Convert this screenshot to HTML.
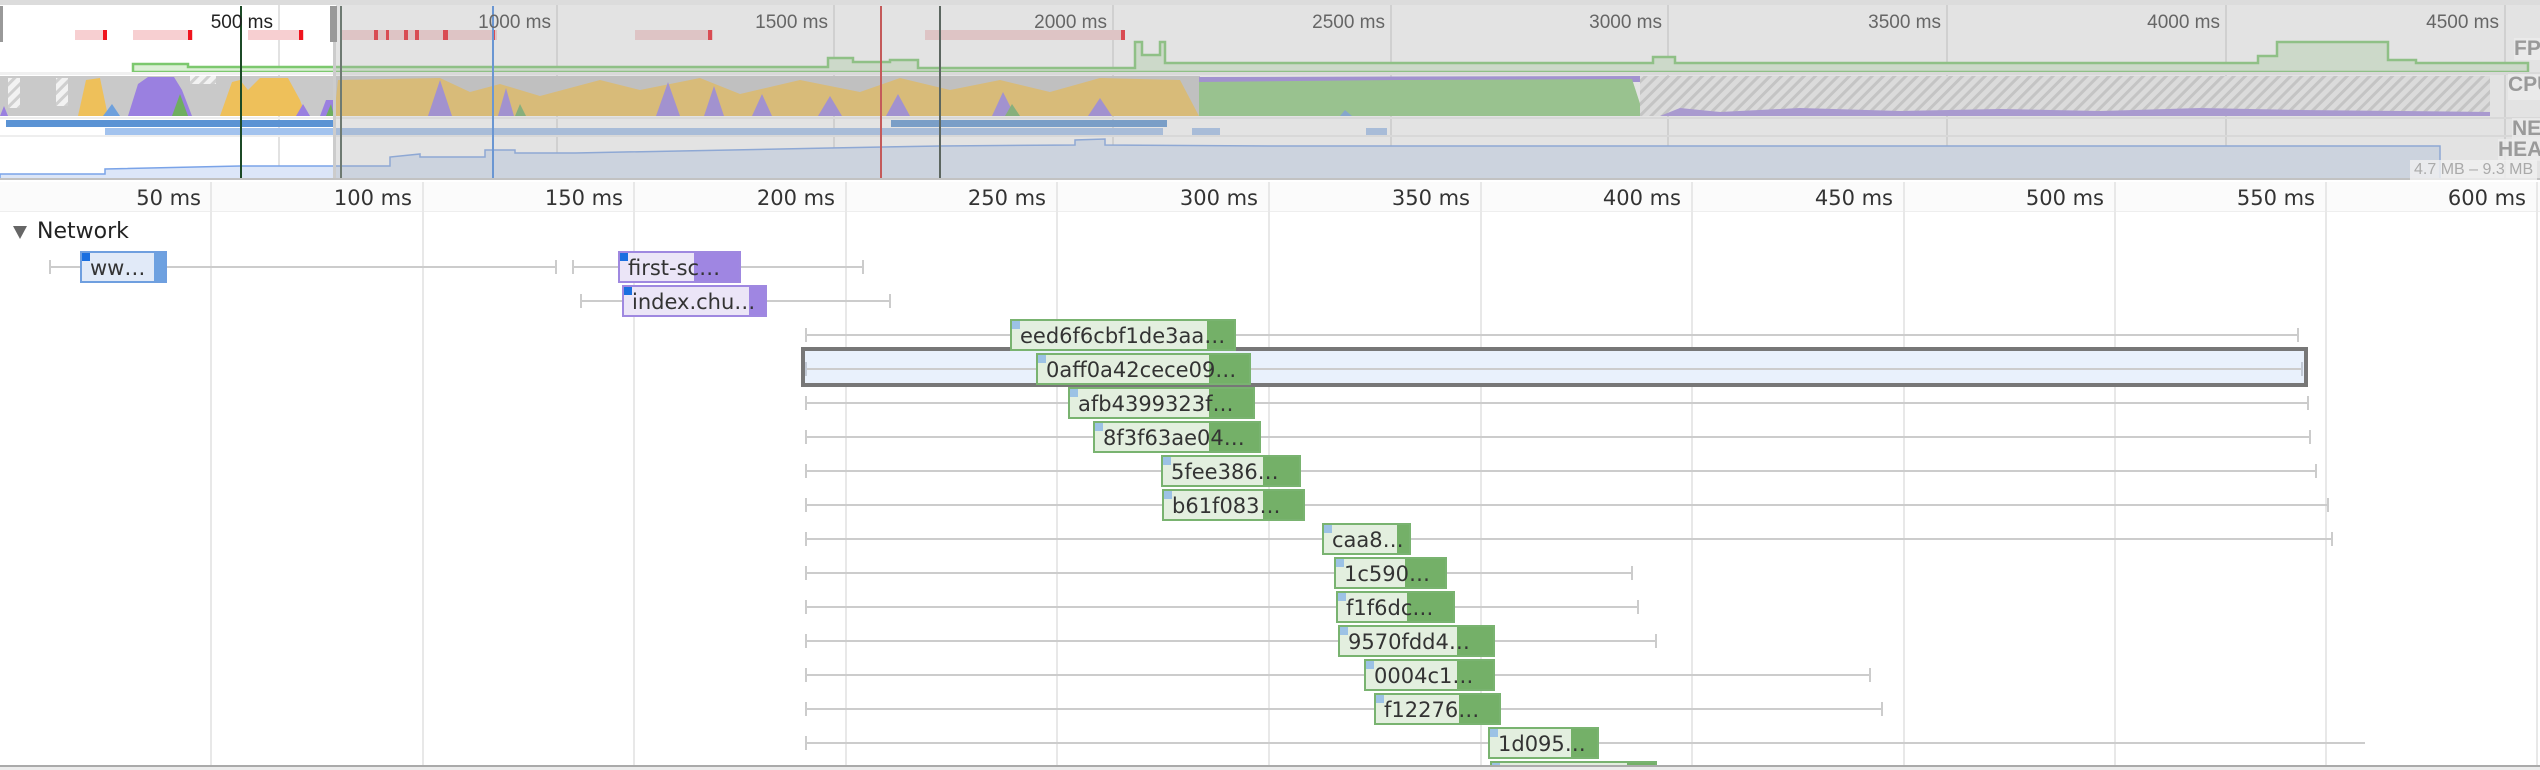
<!DOCTYPE html>
<html><head><meta charset="utf-8"><style>
*{margin:0;padding:0;box-sizing:border-box}
html{width:2540px;height:770px;overflow:hidden}
body{width:2540px;height:770px;background:#fff;position:relative;overflow:hidden;font-family:"DejaVu Sans","Liberation Sans",sans-serif}
.a{position:absolute}
.gl{position:absolute;top:182px;height:584px;width:2px;background:#e8e8e8}
.rl{position:absolute;top:186px;width:140px;text-align:right;font-size:21px;color:#333;line-height:24px}
.w{position:absolute;top:9px;height:14px;border-left:2px solid #ccc;border-right:2px solid #ccc}
.w::after{content:"";position:absolute;left:0;right:0;top:6px;height:2px;background:#ccc}
.r{position:absolute;left:0;width:2540px;height:32px}
.b{position:absolute;top:0;height:32px;border:2px solid #79b370;background:#e3efdf;overflow:hidden}
.b .d{position:absolute;top:0;bottom:0;right:0;background:#74b068}
.b .s{position:absolute;left:0;top:0;width:8px;height:8px;background:#9cc2e5}
.b span{position:absolute;left:8px;top:2px;font-size:21px;line-height:26px;color:#333;white-space:nowrap}
.b.p{border-color:#9f88e0;background:#ebe5f7}.b.p .d{background:#9f86e2}
.b.bl{border-color:#6f9fdf;background:#e1eaf8}.b.bl .d{background:#6ea1e0}
.b .s.k{background:#1a6fe0}
.ol{position:absolute;font-family:"Liberation Sans",sans-serif;font-size:19px;color:#333;width:120px;text-align:right;top:12px}
.lab{position:absolute;font-family:"Liberation Sans",sans-serif;font-weight:bold;font-size:21px;color:#9a9a9a;background:rgba(235,235,235,.8);line-height:22px}
</style></head><body>
<div class="a" style="left:0;top:0;width:2540px;height:5px;background:#dcdcdc"></div>
<svg class="a" style="left:0;top:5px" width="2540" height="175" viewBox="0 5 2540 175">
<defs><pattern id="h" width="8" height="8" patternUnits="userSpaceOnUse" patternTransform="rotate(45)"><rect width="8" height="8" fill="#f2f2f2"/><rect width="3" height="8" fill="#cfcfcf"/></pattern></defs>
<rect x="0" y="5" width="2540" height="175" fill="#fff"/>
<g fill="#e2e2e2"><rect x="278" y="5" width="2" height="175"/><rect x="556" y="5" width="2" height="175"/><rect x="833" y="5" width="2" height="175"/><rect x="1112" y="5" width="2" height="175"/><rect x="1390" y="5" width="2" height="175"/><rect x="1667" y="5" width="2" height="175"/><rect x="1946" y="5" width="2" height="175"/><rect x="2225" y="5" width="2" height="175"/><rect x="2504" y="5" width="2" height="175"/></g>
<g fill="#f7cfd1"><rect x="75" y="30" width="32" height="10"/><rect x="133" y="30" width="60" height="10"/><rect x="248" y="30" width="56" height="10"/><rect x="342" y="30" width="155" height="10"/><rect x="635" y="30" width="78" height="10"/><rect x="925" y="30" width="200" height="10"/></g>
<g fill="#f0141e"><rect x="103" y="30" width="4" height="10"/><rect x="188" y="30" width="4" height="10"/><rect x="299" y="30" width="4" height="10"/><rect x="374" y="30" width="4" height="10"/><rect x="386" y="30" width="3" height="10"/><rect x="404" y="30" width="4" height="10"/><rect x="415" y="30" width="4" height="10"/><rect x="443" y="30" width="5" height="10"/><rect x="492" y="30" width="3" height="10"/><rect x="708" y="30" width="4" height="10"/><rect x="1121" y="30" width="4" height="10"/></g>
<path d="M133,72 L133,64 L188,64 L188,67 L828,67 L828,58 L853,58 L853,62 L890,62 L890,60 L918,60 L918,68 L1135,68 L1135,42 L1142,42 L1142,55 L1160,55 L1160,42 L1165,42 L1165,63 L1653,63 L1653,57 L1675,57 L1675,63 L2258,63 L2258,56 L2277,56 L2277,42 L2388,42 L2388,60 L2416,60 L2416,63 L2528,63 L2528,72 Z" fill="#dcefd6" stroke="#7cc86e" stroke-width="2.5"/>
<rect x="0" y="72" width="2540" height="3" fill="#f0f0f0"/>
<rect x="0" y="76" width="1200" height="40" fill="#c9c9c9"/>
<rect x="8" y="78" width="12" height="30" fill="url(#h)"/><rect x="56" y="78" width="12" height="28" fill="url(#h)"/><rect x="190" y="76" width="26" height="8" fill="url(#h)"/>
<g fill="#eec05a"><path d="M78,116 L86,80 L100,78 L108,116Z"/><path d="M220,116 L232,82 L240,80 L248,90 L260,78 L288,78 L300,100 L306,116Z"/><path d="M334,116 L338,80 L440,78 L470,92 L500,84 L540,96 L600,80 L640,90 L700,78 L740,94 L800,80 L860,92 L900,78 L950,90 L1000,80 L1050,92 L1100,78 L1180,80 L1199,116Z"/></g>
<g fill="#9a80e0"><path d="M128,116 L138,84 L148,77 L174,77 L182,90 L192,116Z"/><path d="M296,116 L303,104 L310,116Z"/><path d="M0,116 L4,106 L8,116Z"/><path d="M320,116 L326,100 L334,100 L334,116Z"/>
<path d="M428,116 L440,80 L452,116Z"/><path d="M498,116 L506,88 L514,116Z"/><path d="M656,116 L668,82 L680,116Z"/><path d="M704,116 L714,86 L724,116Z"/><path d="M752,116 L762,94 L772,116Z"/><path d="M818,116 L830,96 L842,116Z"/><path d="M886,116 L898,94 L910,116Z"/><path d="M992,116 L1003,92 L1015,116Z"/><path d="M1088,116 L1100,98 L1112,116Z"/><path d="M1199,116 L1199,77 L1640,76 L1640,82 L1199,84Z"/></g>
<g fill="#6fae5f"><path d="M172,116 L180,94 L188,116Z"/><path d="M326,116 L331,104 L334,116Z"/><path d="M515,116 L520,104 L526,116Z"/><path d="M1005,116 L1012,104 L1020,116Z"/></g>
<path d="M1199,116 L1199,82 L1400,80 L1632,79 L1644,116Z" fill="#8ccb7c"/>
<g fill="#6ea0dc"><path d="M103,116 L112,104 L120,116Z"/><path d="M1340,116 L1345,110 L1352,116Z"/></g>
<rect x="1640" y="76" width="850" height="40" fill="url(#h)"/>
<path d="M1660,116 L1680,108 L1720,112 L1800,108 L1900,111 L2000,109 L2100,111 L2200,108 L2300,110 L2400,111 L2490,112 L2490,116Z" fill="#a48ee0"/>
<rect x="0" y="117" width="2540" height="2" fill="#eee"/>
<rect x="6" y="120" width="328" height="7" fill="#5b93d4"/><rect x="891" y="120" width="276" height="7" fill="#5b93d4"/>
<rect x="105" y="128" width="1058" height="7" fill="#a3c3ee"/><rect x="1192" y="128" width="28" height="7" fill="#a3c3ee"/><rect x="1366" y="128" width="21" height="7" fill="#a3c3ee"/>
<rect x="0" y="135" width="2540" height="2" fill="#eee"/>
<path d="M0,174 L105,174 L105,169 L240,166 L334,166 L390,166 L390,157 L420,154 L420,157 L485,157 L485,150 L515,150 L515,153 L575,153 L830,148 L940,146 L1075,145 L1075,140 L1105,139 L1105,145 L1270,146 L2440,146 L2440,180 L0,180Z" fill="#dce6f8" stroke="#7aa3e8" stroke-width="1.5"/>
<rect x="336" y="5" width="2204" height="175" fill="rgba(178,178,178,0.36)"/>
<rect x="0" y="6" width="3" height="36" fill="#999"/><rect x="330" y="6" width="7" height="36" fill="#999"/>
<rect x="333" y="42" width="3" height="138" fill="#ccc"/>
<rect x="240" y="6" width="2" height="174" fill="#1c4a26"/>
<rect x="340" y="6" width="2" height="174" fill="#6e7a72"/>
<rect x="492" y="6" width="2" height="174" fill="#6a96d2"/>
<rect x="880" y="6" width="2" height="174" fill="#c45a5a"/>
<rect x="939" y="6" width="2" height="174" fill="#5c6660"/>
<rect x="0" y="178" width="2540" height="4" fill="#c2c2c2"/>
</svg>
<div class="ol" style="left:153px;color:#222">500 ms</div>
<div class="ol" style="left:431px;color:#666">1000 ms</div>
<div class="ol" style="left:708px;color:#666">1500 ms</div>
<div class="ol" style="left:987px;color:#666">2000 ms</div>
<div class="ol" style="left:1265px;color:#666">2500 ms</div>
<div class="ol" style="left:1542px;color:#666">3000 ms</div>
<div class="ol" style="left:1821px;color:#666">3500 ms</div>
<div class="ol" style="left:2100px;color:#666">4000 ms</div>
<div class="ol" style="left:2379px;color:#666">4500 ms</div>
<div class="lab" style="left:2514px;top:38px">FPS</div>
<div class="lab" style="left:2508px;top:74px;padding:0 0 4px 0">CPU</div>
<div class="lab" style="left:2512px;top:118px">NET</div>
<div class="lab" style="left:2498px;top:139px">HEAP</div>
<div class="a" style="left:2410px;top:160px;font-family:'Liberation Sans',sans-serif;font-size:16px;color:#aaa;background:rgba(240,240,240,.8);padding:0 4px;line-height:20px;white-space:nowrap">4.7 MB – 9.3 MB</div>

<div class="a" style="left:0;top:182px;width:2540px;height:30px;background:#fbfbfb;border-bottom:1px solid #eee"></div>
<div class="gl" style="left:210px"></div><div class="gl" style="left:422px"></div><div class="gl" style="left:633px"></div><div class="gl" style="left:845px"></div><div class="gl" style="left:1056px"></div><div class="gl" style="left:1268px"></div><div class="gl" style="left:1480px"></div><div class="gl" style="left:1691px"></div><div class="gl" style="left:1903px"></div><div class="gl" style="left:2114px"></div><div class="gl" style="left:2325px"></div><div class="gl" style="left:2536px"></div>
<div class="rl" style="left:61px">50 ms</div><div class="rl" style="left:272px">100 ms</div><div class="rl" style="left:483px">150 ms</div><div class="rl" style="left:695px">200 ms</div><div class="rl" style="left:906px">250 ms</div><div class="rl" style="left:1118px">300 ms</div><div class="rl" style="left:1330px">350 ms</div><div class="rl" style="left:1541px">400 ms</div><div class="rl" style="left:1753px">450 ms</div><div class="rl" style="left:1964px">500 ms</div><div class="rl" style="left:2175px">550 ms</div><div class="rl" style="left:2386px">600 ms</div>

<div class="a" style="left:13px;top:226px;width:0;height:0;border-left:7px solid transparent;border-right:7px solid transparent;border-top:13px solid #666"></div>
<div class="a" style="left:37px;top:219px;font-size:22px;line-height:26px;color:#222">Network</div>

<div class="a" style="left:801px;top:347px;width:1507px;height:40px;border:4px solid #777;background:#e9f1fc"></div>

<div class="r" style="top:251px"><div class="w" style="left:49px;width:508px"></div><div class="w" style="left:572px;width:292px"></div>
<div class="b bl" style="left:80px;width:87px"><div class="d" style="width:11px"></div><div class="s k"></div><span>ww…</span></div>
<div class="b p" style="left:618px;width:123px"><div class="d" style="width:45px"></div><div class="s k"></div><span>first-sc…</span></div></div>
<div class="r" style="top:285px"><div class="w" style="left:580px;width:311px"></div>
<div class="b p" style="left:622px;width:145px"><div class="d" style="width:16px"></div><div class="s k"></div><span>index.chu…</span></div></div>
<div class="r" style="top:319px"><div class="w" style="left:805px;width:1494px"></div>
<div class="b" style="left:1010px;width:226px"><div class="d" style="width:27px"></div><div class="s"></div><span>eed6f6cbf1de3aa…</span></div></div>
<div class="r" style="top:353px"><div class="w" style="left:805px;width:1498px;border-color:#c2cad6"></div>
<div class="b" style="left:1036px;width:215px"><div class="d" style="width:40px"></div><div class="s"></div><span>0aff0a42cece09…</span></div></div>
<div class="r" style="top:387px"><div class="w" style="left:805px;width:1504px"></div>
<div class="b" style="left:1068px;width:187px"><div class="d" style="width:44px"></div><div class="s"></div><span>afb4399323f…</span></div></div>
<div class="r" style="top:421px"><div class="w" style="left:805px;width:1506px"></div>
<div class="b" style="left:1093px;width:168px"><div class="d" style="width:50px"></div><div class="s"></div><span>8f3f63ae04…</span></div></div>
<div class="r" style="top:455px"><div class="w" style="left:805px;width:1512px"></div>
<div class="b" style="left:1161px;width:140px"><div class="d" style="width:36px"></div><div class="s"></div><span>5fee386…</span></div></div>
<div class="r" style="top:489px"><div class="w" style="left:805px;width:1524px"></div>
<div class="b" style="left:1162px;width:143px"><div class="d" style="width:40px"></div><div class="s"></div><span>b61f083…</span></div></div>
<div class="r" style="top:523px"><div class="w" style="left:805px;width:1528px"></div>
<div class="b" style="left:1322px;width:89px"><div class="d" style="width:12px"></div><div class="s"></div><span>caa8…</span></div></div>
<div class="r" style="top:557px"><div class="w" style="left:805px;width:828px"></div>
<div class="b" style="left:1334px;width:113px"><div class="d" style="width:40px"></div><div class="s"></div><span>1c590…</span></div></div>
<div class="r" style="top:591px"><div class="w" style="left:805px;width:834px"></div>
<div class="b" style="left:1336px;width:119px"><div class="d" style="width:46px"></div><div class="s"></div><span>f1f6dc…</span></div></div>
<div class="r" style="top:625px"><div class="w" style="left:805px;width:852px"></div>
<div class="b" style="left:1338px;width:157px"><div class="d" style="width:36px"></div><div class="s"></div><span>9570fdd4…</span></div></div>
<div class="r" style="top:659px"><div class="w" style="left:805px;width:1066px"></div>
<div class="b" style="left:1364px;width:131px"><div class="d" style="width:36px"></div><div class="s"></div><span>0004c1…</span></div></div>
<div class="r" style="top:693px"><div class="w" style="left:805px;width:1078px"></div>
<div class="b" style="left:1374px;width:127px"><div class="d" style="width:40px"></div><div class="s"></div><span>f12276…</span></div></div>
<div class="r" style="top:727px"><div class="w" style="left:805px;width:1560px;border-right:none"></div>
<div class="b" style="left:1488px;width:111px"><div class="d" style="width:26px"></div><div class="s"></div><span>1d095…</span></div></div>
<div class="a" style="left:1490px;top:761px;width:167px;height:5px;border:2px solid #79b370;border-bottom:none;background:#e3efdf;overflow:hidden"><div class="a" style="right:0;top:0;width:28px;height:5px;background:#74b068"></div><div class="a" style="left:0;top:0;width:8px;height:5px;background:#9cc2e5"></div></div>
<div class="a" style="left:0;top:765px;width:2540px;height:5px;background:#ececec;border-top:2px solid #aaa"></div>
</body></html>
